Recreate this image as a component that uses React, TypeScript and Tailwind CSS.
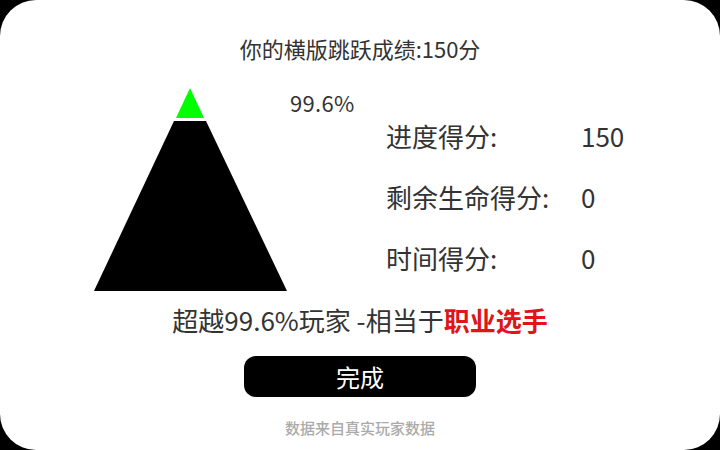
import React from "react";

export default function App() {
  const font = { fontFamily: '"Noto Sans CJK SC", "Noto Sans", sans-serif' };
  return (
    <div className="w-[720px] h-[450px] bg-black overflow-hidden" style={font}>
      <div className="w-[720px] h-[450px] bg-white rounded-[36px] flex flex-col text-[#333]">
        <div className="pt-[33px] text-center text-[22px] leading-[30px]">你的横版跳跃成绩:150分</div>
        <div className="flex mt-[25px] h-[204px]">
          <svg className="ml-[94px] shrink-0" width="194" height="204" viewBox="0 0 194 204">
            <polygon points="96,0 82,30 110,30" fill="#00ff00" />
            <polygon points="80,33 112,33 193,203 0,203" fill="#000" />
          </svg>
          <div className="ml-[2px] w-[96px] text-[22px] leading-[28px] self-start tracking-[0.3px]">99.6%</div>
          <div className="mt-[17px] flex flex-col text-[26px] leading-[61px]">
            <div className="flex"><span className="w-[195px]">进度得分:</span><span>150</span></div>
            <div className="flex"><span className="w-[195px]">剩余生命得分:</span><span>0</span></div>
            <div className="flex"><span className="w-[195px]">时间得分:</span><span>0</span></div>
          </div>
        </div>
        <div className="mt-[12px] text-center text-[26px] leading-[32px]">
          超越99.6%玩家 -相当于<span className="font-bold text-[#e0141a]">职业选手</span>
        </div>
        <div className="mt-[20px] flex justify-center">
          <div className="w-[232px] h-[41px] bg-black rounded-[12px] text-white text-[24px] flex items-center justify-center">完成</div>
        </div>
        <div className="mt-[21px] text-center text-[15px] leading-[20px] text-[#aaaaaa] font-medium">数据来自真实玩家数据</div>
      </div>
    </div>
  );
}
